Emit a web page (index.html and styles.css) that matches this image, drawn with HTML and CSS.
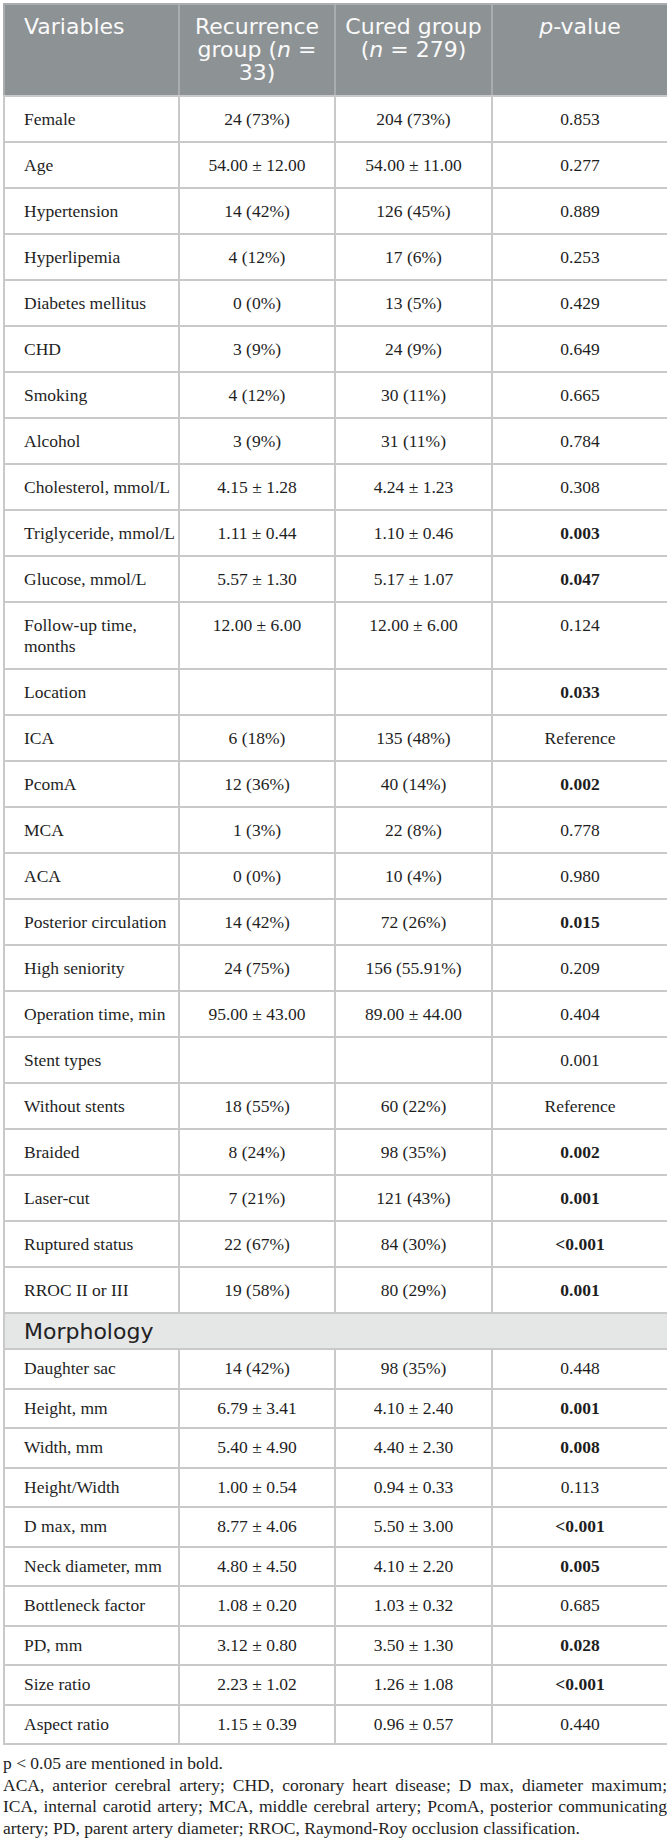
FILE: index.html
```html
<!DOCTYPE html>
<html lang="en">
<head>
  <meta charset="UTF-8" />
  <meta name="viewport" content="width=device-width, initial-scale=1.0"/>
  <title>Recurrence vs cured group</title>
  <link rel="stylesheet" href="styles.css">
</head>
<body>
  <table class="data-table">
    <colgroup>
      <col class="col-var">
      <col class="col-rec">
      <col class="col-cur">
      <col class="col-p">
    </colgroup>
    <thead>
      <tr>
        <th class="head-left">Variables</th>
        <th>Recurrence group (<i>n</i> = 33)</th>
        <th>Cured group (<i>n</i> = 279)</th>
        <th><i>p</i>-value</th>
      </tr>
    </thead>
    <tbody>
      <tr><td>Female</td><td>24 (73%)</td><td>204 (73%)</td><td>0.853</td></tr>
      <tr><td>Age</td><td>54.00 ± 12.00</td><td>54.00 ± 11.00</td><td>0.277</td></tr>
      <tr><td>Hypertension</td><td>14 (42%)</td><td>126 (45%)</td><td>0.889</td></tr>
      <tr><td>Hyperlipemia</td><td>4 (12%)</td><td>17 (6%)</td><td>0.253</td></tr>
      <tr><td>Diabetes mellitus</td><td>0 (0%)</td><td>13 (5%)</td><td>0.429</td></tr>
      <tr><td>CHD</td><td>3 (9%)</td><td>24 (9%)</td><td>0.649</td></tr>
      <tr><td>Smoking</td><td>4 (12%)</td><td>30 (11%)</td><td>0.665</td></tr>
      <tr><td>Alcohol</td><td>3 (9%)</td><td>31 (11%)</td><td>0.784</td></tr>
      <tr><td>Cholesterol, mmol/L</td><td>4.15 ± 1.28</td><td>4.24 ± 1.23</td><td>0.308</td></tr>
      <tr><td>Triglyceride, mmol/L</td><td>1.11 ± 0.44</td><td>1.10 ± 0.46</td><td><b>0.003</b></td></tr>
      <tr><td>Glucose, mmol/L</td><td>5.57 ± 1.30</td><td>5.17 ± 1.07</td><td><b>0.047</b></td></tr>
      <tr><td>Follow-up time, months</td><td>12.00 ± 6.00</td><td>12.00 ± 6.00</td><td>0.124</td></tr>
      <tr><td>Location</td><td></td><td></td><td><b>0.033</b></td></tr>
      <tr><td>ICA</td><td>6 (18%)</td><td>135 (48%)</td><td>Reference</td></tr>
      <tr><td>PcomA</td><td>12 (36%)</td><td>40 (14%)</td><td><b>0.002</b></td></tr>
      <tr><td>MCA</td><td>1 (3%)</td><td>22 (8%)</td><td>0.778</td></tr>
      <tr><td>ACA</td><td>0 (0%)</td><td>10 (4%)</td><td>0.980</td></tr>
      <tr><td>Posterior circulation</td><td>14 (42%)</td><td>72 (26%)</td><td><b>0.015</b></td></tr>
      <tr><td>High seniority</td><td>24 (75%)</td><td>156 (55.91%)</td><td>0.209</td></tr>
      <tr><td>Operation time, min</td><td>95.00 ± 43.00</td><td>89.00 ± 44.00</td><td>0.404</td></tr>
      <tr><td>Stent types</td><td></td><td></td><td>0.001</td></tr>
      <tr><td>Without stents</td><td>18 (55%)</td><td>60 (22%)</td><td>Reference</td></tr>
      <tr><td>Braided</td><td>8 (24%)</td><td>98 (35%)</td><td><b>0.002</b></td></tr>
      <tr><td>Laser-cut</td><td>7 (21%)</td><td>121 (43%)</td><td><b>0.001</b></td></tr>
      <tr><td>Ruptured status</td><td>22 (67%)</td><td>84 (30%)</td><td><b>&lt;0.001</b></td></tr>
      <tr><td>RROC II or III</td><td>19 (58%)</td><td>80 (29%)</td><td><b>0.001</b></td></tr>
    </tbody>
    <tbody class="morph">
      <tr class="section-row"><td colspan="4">Morphology</td></tr>
      <tr><td>Daughter sac</td><td>14 (42%)</td><td>98 (35%)</td><td>0.448</td></tr>
      <tr><td>Height, mm</td><td>6.79 ± 3.41</td><td>4.10 ± 2.40</td><td><b>0.001</b></td></tr>
      <tr><td>Width, mm</td><td>5.40 ± 4.90</td><td>4.40 ± 2.30</td><td><b>0.008</b></td></tr>
      <tr><td>Height/Width</td><td>1.00 ± 0.54</td><td>0.94 ± 0.33</td><td>0.113</td></tr>
      <tr><td>D max, mm</td><td>8.77 ± 4.06</td><td>5.50 ± 3.00</td><td><b>&lt;0.001</b></td></tr>
      <tr><td>Neck diameter, mm</td><td>4.80 ± 4.50</td><td>4.10 ± 2.20</td><td><b>0.005</b></td></tr>
      <tr><td>Bottleneck factor</td><td>1.08 ± 0.20</td><td>1.03 ± 0.32</td><td>0.685</td></tr>
      <tr><td>PD, mm</td><td>3.12 ± 0.80</td><td>3.50 ± 1.30</td><td><b>0.028</b></td></tr>
      <tr><td>Size ratio</td><td>2.23 ± 1.02</td><td>1.26 ± 1.08</td><td><b>&lt;0.001</b></td></tr>
      <tr><td>Aspect ratio</td><td>1.15 ± 0.39</td><td>0.96 ± 0.57</td><td>0.440</td></tr>
    </tbody>
  </table>

  <div class="notes">
    <p class="note-first">p &lt; 0.05 are mentioned in bold.</p>
    <p class="note-abbr">
      <span class="note-line">ACA, anterior cerebral artery; CHD, coronary heart disease; D max, diameter maximum;</span>
      <span class="note-line">ICA, internal carotid artery; MCA, middle cerebral artery; PcomA, posterior communicating</span>
      <span class="note-last">artery; PD, parent artery diameter; RROC, Raymond-Roy occlusion classification.</span>
    </p>
  </div>
</body>
</html>
```

FILE: styles.css
```css
body {
  margin: 3px;
  background: #fff;
  color: #1e1e1e;
  font-family: 'Liberation Serif', 'Times New Roman', serif;
}

.data-table {
  width: 664px;
  border-collapse: collapse;
  table-layout: fixed;
  font-size: 17.5px;
}

.col-var { width: 175px; }
.col-rec { width: 156px; }
.col-cur { width: 157px; }
.col-p { width: 176px; }

.data-table th,
.data-table td {
  border: 2px solid #c9c9c9;
}

.data-table th {
  background-color: #8d9295;
  color: #fafafa;
  font-family: 'DejaVu Sans', 'Noto Sans', sans-serif;
  font-size: 22px;
  font-weight: normal;
  line-height: 23px;
  text-align: center;
  vertical-align: top;
  height: 92px;
  box-sizing: border-box;
  padding: 10px 6px 0;
  border-color: #a9adb0 #a9adb0 #c9c9c9;
}

.data-table th.head-left {
  text-align: left;
  padding-left: 19px;
}

.data-table td {
  line-height: 21px;
  padding: 12px 4px 11px;
  text-align: center;
  vertical-align: top;
}

.data-table td:first-child {
  text-align: left;
  padding-left: 19px;
  padding-right: 2px;
}

.morph td {
  padding-top: 8.25px;
  padding-bottom: 8.25px;
}

.morph .section-row td {
  background-color: #e5e6e6;
  font-family: 'DejaVu Sans', 'Noto Sans', sans-serif;
  font-size: 22px;
  line-height: 23px;
  color: #222;
  padding-top: 6px;
  padding-bottom: 5px;
}

.notes {
  width: 664px;
  margin-top: 8px;
  font-size: 17.5px;
  line-height: 21.7px;
}

.notes p {
  margin: 0;
}

.note-line {
  display: block;
  text-align: justify;
  text-align-last: justify;
}

.note-last {
  display: block;
}
```
